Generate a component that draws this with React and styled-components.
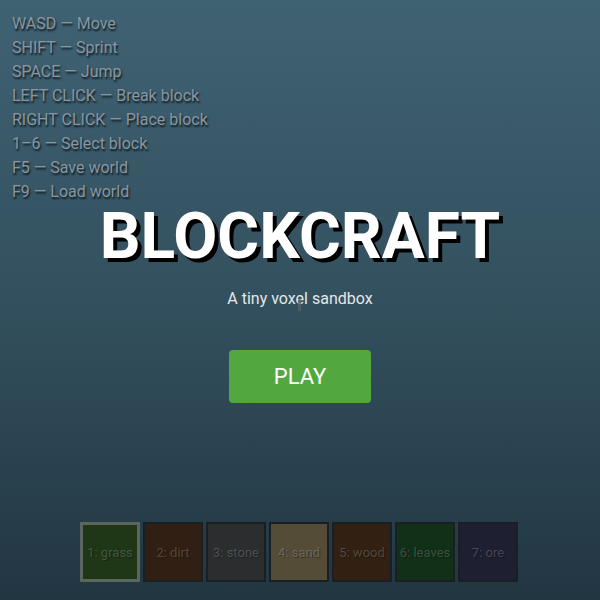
import React from "react";
import styled, { createGlobalStyle } from "styled-components";

const Global = createGlobalStyle`
  html, body { margin: 0; padding: 0; }
  body {
    width: 600px;
    height: 600px;
    overflow: hidden;
    font-family: Roboto, "Liberation Sans", Arial, sans-serif;
  }
`;

const Scene = styled.div`
  position: relative;
  width: 600px;
  height: 600px;
  overflow: hidden;
  background: linear-gradient(180deg, #3f6273 0%, #33505e 50%, #223642 100%);
`;

const Controls = styled.ul`
  position: absolute;
  top: 12px;
  left: 12px;
  margin: 0;
  padding: 0;
  list-style: none;
  display: flex;
  flex-direction: column;
`;

const ControlLine = styled.li`
  font-size: 16px;
  line-height: 24px;
  color: #8896a0;
  text-shadow: 1px 2px 2px rgba(8, 14, 18, 0.9);
  white-space: nowrap;
`;

const Hotbar = styled.div`
  position: absolute;
  left: 0;
  right: 0;
  bottom: 18px;
  display: flex;
  justify-content: center;
  gap: 3px;
  padding-right: 2px;
`;

const Slot = styled.div`
  box-sizing: border-box;
  width: 60px;
  height: 60px;
  background: ${(p) => p.$fill};
  border: ${(p) => (p.$selected ? "3px solid #5b665f" : "2px solid #182024")};
  display: flex;
  align-items: center;
  justify-content: center;
  font-size: 13px;
  color: rgba(255, 255, 255, 0.2);
  text-shadow: 1px 1px 1px rgba(0, 0, 0, 0.35);
  white-space: nowrap;
`;

const Menu = styled.div`
  position: absolute;
  inset: 0;
  display: flex;
  flex-direction: column;
  align-items: center;
  justify-content: center;
  padding-top: 8px;
`;

const Title = styled.h1`
  margin: 0;
  font-size: 64px;
  line-height: 64px;
  font-weight: 700;
  color: #ffffff;
  text-shadow: 4px 4px 0 #000000;
`;

const Subtitle = styled.p`
  margin: 20px 0 0;
  font-size: 16px;
  line-height: 20px;
  color: #e2e8ea;
`;

const PlayButton = styled.button`
  margin-top: 41px;
  width: 142px;
  height: 53px;
  border: none;
  border-radius: 4px;
  background: #52a83f;
  color: #ffffff;
  font-family: Roboto, "Liberation Sans", Arial, sans-serif;
  font-size: 22px;
  font-weight: 400;
  cursor: pointer;
`;

const Cursor = styled.div`
  position: absolute;
  left: 298px;
  top: 299px;
  width: 3px;
  height: 12px;
  background: #5a6266;
  border-radius: 1px;
  opacity: 0.8;
`;

const controls = [
  "WASD — Move",
  "SHIFT — Sprint",
  "SPACE — Jump",
  "LEFT CLICK — Break block",
  "RIGHT CLICK — Place block",
  "1–6 — Select block",
  "F5 — Save world",
  "F9 — Load world",
];

const blocks = [
  { label: "1: grass", fill: "#1f3717" },
  { label: "2: dirt", fill: "#321f14" },
  { label: "3: stone", fill: "#2b2d2f" },
  { label: "4: sand", fill: "#544c37" },
  { label: "5: wood", fill: "#322013" },
  { label: "6: leaves", fill: "#123017" },
  { label: "7: ore", fill: "#1e2032" },
];

export default function App() {
  return (
    <>
      <Global />
      <Scene>
        <Controls>
          {controls.map((c) => (
            <ControlLine key={c}>{c}</ControlLine>
          ))}
        </Controls>
        <Hotbar>
          {blocks.map((b, i) => (
            <Slot key={b.label} $fill={b.fill} $selected={i === 0}>
              {b.label}
            </Slot>
          ))}
        </Hotbar>
        <Menu>
          <Title>BLOCKCRAFT</Title>
          <Subtitle>A tiny voxel sandbox</Subtitle>
          <PlayButton>PLAY</PlayButton>
        </Menu>
        <Cursor />
      </Scene>
    </>
  );
}
